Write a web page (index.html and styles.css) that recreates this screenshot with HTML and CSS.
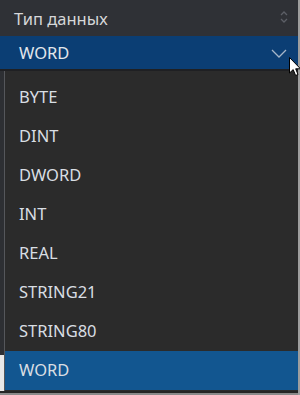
FILE: index.html
```html
<!DOCTYPE html>
<html>
<head>
<meta charset="utf-8">
<link rel="stylesheet" href="styles.css">
</head>
<body>
<div class="frame">
  <div class="header">
    <span class="label">Тип данных</span>
    <svg class="spin" width="8" height="14" viewBox="0 0 8 14"><path d="M1 5 L4 2 L7 5 M1 9 L4 12 L7 9" fill="none" stroke="#5c5f66" stroke-width="1.3"/></svg>
  </div>
  <div class="select">
    <span class="value">WORD</span>
    <svg class="chev" width="16" height="9" viewBox="0 0 16 9"><path d="M1 1 L8 8 L15 1" fill="none" stroke="#a6b6c8" stroke-width="1.3"/></svg>
  </div>
  <div class="body">
    <div class="side"><div class="side-white"></div></div>
    <ul class="list">
      <li class="item">BYTE</li>
      <li class="item">DINT</li>
      <li class="item">DWORD</li>
      <li class="item">INT</li>
      <li class="item">REAL</li>
      <li class="item">STRING21</li>
      <li class="item">STRING80</li>
      <li class="item selected">WORD</li>
    </ul>
  </div>
  <div class="bottom"></div>
</div>
<svg class="cursor" width="13" height="20" viewBox="0 0 13 20"><path d="M0.5 0.5 L0.5 16 L4.2 12.6 L6.6 18.5 L9 17.5 L6.7 11.8 L11.5 11.8 Z" fill="#fff" stroke="#000" stroke-width="1"/></svg>
</body>
</html>
```
FILE: styles.css
```css
html, body {
  margin: 0;
  padding: 0;
  width: 300px;
  height: 395px;
  overflow: hidden;
  background: #9e9e9e;
  font-family: "Noto Sans", "Open Sans", sans-serif;
}
.frame {
  width: 298px;
  height: 395px;
  display: flex;
  flex-direction: column;
  background: #2b2d31;
}
.header {
  height: 36px;
  flex: none;
  background: #2f3136;
  display: flex;
  align-items: center;
  justify-content: space-between;
  padding: 0 10px 0 14px;
  box-sizing: border-box;
}
.label {
  color: #d6d7d9;
  font-size: 16.5px;
}
.spin { margin-top: -2px; }
.select {
  height: 35px;
  flex: none;
  background: #0b3e74;
  display: flex;
  align-items: center;
  justify-content: space-between;
  padding: 0 11px 0 19px;
  box-sizing: border-box;
  border-bottom: 2px solid #1f2023;
}
.value {
  color: #e2e7ec;
  font-size: 16.5px;
}
.chev { margin-top: 1px; }
.body {
  flex: 1;
  display: flex;
  min-height: 0;
}
.side {
  width: 4px;
  background: #2d2f33;
  border-right: 1px solid #55575b;
  display: flex;
  flex-direction: column;
  justify-content: flex-end;
}
.side-white {
  height: 36px;
  background: #e8e8e8;
}
.list {
  flex: 1;
  list-style: none;
  margin: 0;
  padding: 7px 0 0 0;
  background: #2b2b2b;
}
.item {
  height: 39px;
  line-height: 38px;
  padding-left: 14px;
  color: #d9dee3;
  font-size: 16.5px;
}
.item.selected {
  background: #125690;
}
.bottom {
  height: 2px;
  flex: none;
  background: #252525;
  border-bottom: 2px solid #8a8a8a;
}
.cursor {
  position: absolute;
  left: 289px;
  top: 57px;
}
```
